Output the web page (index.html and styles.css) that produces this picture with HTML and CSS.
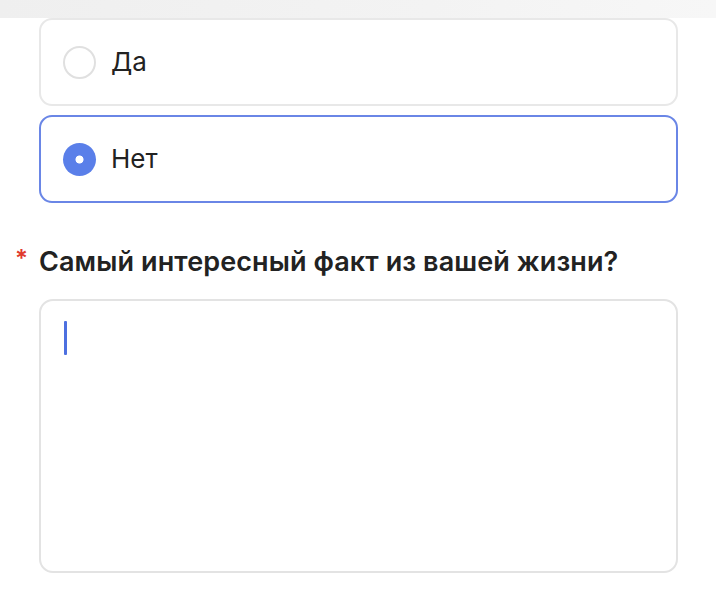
FILE: index.html
```html
<!DOCTYPE html>
<html lang="ru">
<head>
<meta charset="utf-8">
<link rel="stylesheet" href="styles.css">
</head>
<body>
<div class="topbar"></div>
<div class="page">
  <div class="options">
    <label class="option">
      <span class="radio"></span>
      <span class="option-text">Да</span>
    </label>
    <label class="option option--checked">
      <span class="radio radio--checked"></span>
      <span class="option-text">Нет</span>
    </label>
  </div>
  <div class="question">
    <span class="required">*</span>
    <h2 class="question-title">Самый интересный факт из вашей жизни?</h2>
  </div>
  <div class="textarea">
    <span class="caret"></span>
  </div>
</div>
</body>
</html>
```

FILE: styles.css
```css
* { box-sizing: border-box; }
html, body {
  margin: 0;
  background: #ffffff;
  font-family: Inter, "Noto Sans", Arial, sans-serif;
  color: #222222;
}
.topbar {
  height: 18px;
  background: linear-gradient(90deg, #efefef 0%, #f3f3f3 60%, #f7f7f7 100%);
}
.page {
  padding: 0 38px 0 39px;
}
.options {
  display: flex;
  flex-direction: column;
  gap: 9px;
}
.option {
  display: flex;
  align-items: center;
  height: 88px;
  padding-left: 22px;
  border: 2px solid #e8e8e8;
  border-radius: 13px;
  background: #fff;
}
.option--checked {
  border-color: #6a86e6;
}
.radio {
  width: 33px;
  height: 33px;
  border-radius: 50%;
  border: 2px solid #e0e0e0;
  background: #fff;
  flex: none;
}
.radio--checked {
  border: none;
  background: radial-gradient(circle, #ffffff 0 3.6px, #5a7fe9 4.4px);
}
.option-text {
  margin-left: 15px;
  font-size: 26px;
  line-height: 32px;
  color: #222;
}
.question {
  display: flex;
  align-items: flex-start;
  margin: 42px 0 0 -39px;
}
.required {
  width: 39px;
  padding-right: 11px;
  text-align: right;
  color: #e0392e;
  font-size: 24px;
  line-height: 28px;
  font-weight: 600;
}
.question-title {
  margin: 0;
  font-size: 27px;
  line-height: 34px;
  letter-spacing: 0.1px;
  font-weight: 600;
  color: #222;
}
.textarea {
  margin-top: 20px;
  height: 274px;
  border: 2px solid #e3e3e3;
  border-radius: 14px;
  padding: 20px 0 0 23px;
}
.caret {
  display: block;
  width: 3px;
  height: 34px;
  background: #4d70e0;
  border-radius: 1px;
}
```
